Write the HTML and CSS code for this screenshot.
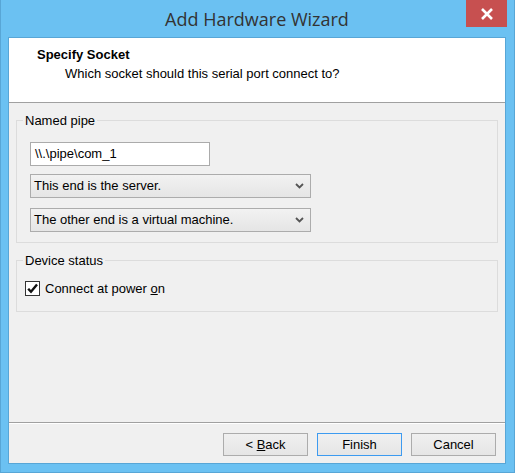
FILE: index.html
```html
<!DOCTYPE html>
<html>
<head>
<meta charset="utf-8">
<title>Add Hardware Wizard</title>
<link rel="stylesheet" href="styles.css">
</head>
<body>
<div class="window">
  <div class="titlebar">
    <span class="title">Add Hardware Wizard</span>
    <div class="close">
      <svg width="14" height="12" viewBox="0 0 14 12"><path d="M2 1 L12 11 M12 1 L2 11" stroke="#fff" stroke-width="2.6" fill="none"/></svg>
    </div>
  </div>
  <div class="client">
    <div class="header">
      <div class="heading">Specify Socket</div>
      <div class="subheading">Which socket should this serial port connect to?</div>
    </div>
    <div class="panel">
      <fieldset class="group">
        <legend class="group-label">Named pipe</legend>
        <div class="group-body">
          <div class="textbox">\\.\pipe\com_1</div>
          <div class="combo combo-first">
            <span class="combo-text">This end is the server.</span>
            <svg class="chevron" width="9" height="6" viewBox="0 0 9 6"><path d="M1 1 L4.5 4.5 L8 1" stroke="#555" stroke-width="1.8" fill="none"/></svg>
          </div>
          <div class="combo">
            <span class="combo-text">The other end is a virtual machine.</span>
            <svg class="chevron" width="9" height="6" viewBox="0 0 9 6"><path d="M1 1 L4.5 4.5 L8 1" stroke="#555" stroke-width="1.8" fill="none"/></svg>
          </div>
        </div>
      </fieldset>
      <fieldset class="group group-second">
        <legend class="group-label">Device status</legend>
        <div class="group-body group-body-status">
          <div class="check-row">
            <span class="checkbox">
              <svg width="13" height="13" viewBox="0 0 13 13"><path d="M2.2 6.8 L5 9.8 L11 2.6" stroke="#111" stroke-width="2.4" fill="none"/></svg>
            </span>
            <span class="check-label">Connect at power <u>o</u>n</span>
          </div>
        </div>
      </fieldset>
    </div>
    <div class="footer">
      <div class="button"><span>&lt; <u>B</u>ack</span></div>
      <div class="button button-default"><span>Finish</span></div>
      <div class="button"><span>Cancel</span></div>
    </div>
  </div>
</div>
</body>
</html>
```

FILE: styles.css
```css
html, body {
  margin: 0;
  padding: 0;
  background: #ffffff;
}

.window {
  box-sizing: border-box;
  width: 515px;
  height: 473px;
  background: #6bc1f2;
  border: 1px solid #58a6d6;
  border-top: none;
  padding: 0 8px 8px 7px;
  display: flex;
  flex-direction: column;
  font-family: "Liberation Sans", Arial, sans-serif;
  font-size: 13px;
  color: #000;
}

.titlebar {
  position: relative;
  height: 37px;
  flex: none;
  display: flex;
  align-items: center;
  justify-content: center;
}

.title {
  font-family: "Open Sans", "Noto Sans", sans-serif;
  font-size: 18px;
  color: #333333;
  padding-top: 1px;
}

.close {
  position: absolute;
  top: 0;
  right: -1px;
  width: 41px;
  height: 27px;
  background: #c75050;
  display: flex;
  align-items: center;
  justify-content: center;
}

.client {
  flex: 1;
  display: flex;
  flex-direction: column;
  border: 1px solid #58a6d6;
  background: #f0f0f0;
  min-height: 0;
}

.header {
  box-sizing: border-box;
  height: 65px;
  flex: none;
  background: #ffffff;
  border-bottom: 1px solid #a0a0a0;
  padding: 9px 0 0 28px;
}

.heading {
  font-weight: bold;
  line-height: 15px;
}

.subheading {
  line-height: 15px;
  margin: 4px 0 0 28px;
}

.panel {
  flex: 1;
  padding: 10px 7px 0;
}

.group {
  margin: 0;
  padding: 0;
  border: 1px solid #dcdcdc;
  min-width: 0;
}

.group-second {
  margin-top: 10px;
}

.group-label {
  margin-left: 6px;
  padding: 0 2px;
  line-height: 15px;
}

.group-body {
  padding: 14px 13px 10px;
}

.group-body-status {
  padding: 13px 8px 15px;
}

.textbox {
  box-sizing: border-box;
  width: 180px;
  height: 24px;
  background: #ffffff;
  border: 1px solid #ababab;
  padding: 0 4px;
  line-height: 22px;
  margin-bottom: 8px;
}

.combo {
  box-sizing: border-box;
  width: 281px;
  height: 24px;
  border: 1px solid #acacac;
  background: linear-gradient(#f2f2f2, #e5e5e5);
  display: flex;
  align-items: center;
  padding: 0 6px 0 3px;
}

.combo-first {
  margin-bottom: 10px;
}

.combo-text {
  flex: 1;
  line-height: 22px;
}

.chevron {
  flex: none;
}

.check-row {
  display: flex;
  align-items: center;
  height: 15px;
}

.checkbox {
  box-sizing: border-box;
  width: 15px;
  height: 15px;
  border: 1px solid #333333;
  background: #ffffff;
  display: flex;
  align-items: center;
  justify-content: center;
  margin-right: 5px;
}

.check-label {
  line-height: 15px;
}

.footer {
  flex: none;
  border-top: 1px solid #a0a0a0;
  box-shadow: inset 0 1px 0 #ffffff;
  padding: 10px 9px 7px;
  display: flex;
  justify-content: flex-end;
  gap: 9px;
}

.button {
  box-sizing: border-box;
  width: 85px;
  height: 23px;
  border: 1px solid #acacac;
  background: linear-gradient(#f0f0f0, #e5e5e5);
  display: flex;
  align-items: center;
  justify-content: center;
  line-height: 15px;
}

.button-default {
  border-color: #3d9bf0;
}
```
